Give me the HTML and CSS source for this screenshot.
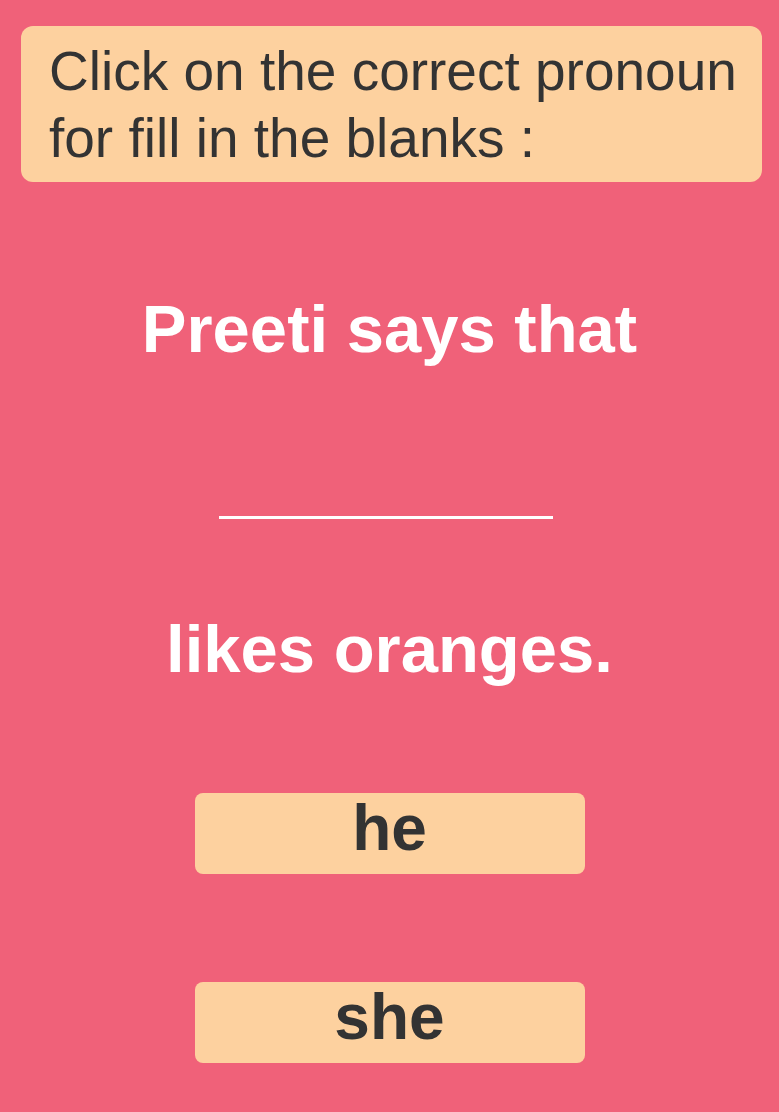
FILE: index.html
```html
<!DOCTYPE html>
<html>
<head>
<meta charset="utf-8">
<link rel="stylesheet" href="styles.css">
</head>
<body>
<div class="page">
  <div class="prompt">Click on the correct pronoun for fill in the blanks :</div>
  <div class="sentence first">Preeti says that</div>
  <div class="blank"></div>
  <div class="sentence second">likes oranges.</div>
  <div class="options">
    <div class="option">he</div>
    <div class="option">she</div>
  </div>
</div>
</body>
</html>
```
FILE: styles.css
```css
html, body {
  margin: 0;
  padding: 0;
  background: #f06179;
}
.page {
  width: 779px;
  height: 1112px;
  background: #f06179;
  font-family: "Liberation Sans", Arial, sans-serif;
  overflow: hidden;
  display: flex;
  flex-direction: column;
}
.prompt {
  margin: 26px 17px 0 21px;
  height: 156px;
  box-sizing: border-box;
  background: #fdd19f;
  border-radius: 12px;
  padding: 12px 20px 0 28px;
  font-size: 55px;
  line-height: 67px;
  color: #333333;
}
.sentence {
  font-size: 67px;
  font-weight: bold;
  line-height: 80px;
  color: #ffffff;
  text-align: center;
}
.first {
  margin-top: 107px;
}
.blank {
  width: 334px;
  height: 3px;
  background: #ffffff;
  margin: 147px auto 0;
  position: relative;
  left: -4px;
}
.second {
  margin-top: 90px;
}
.options {
  display: flex;
  flex-direction: column;
  align-items: center;
  gap: 108px;
  margin-top: 104px;
}
.option {
  width: 390px;
  height: 81px;
  box-sizing: border-box;
  background: #fdd19f;
  border-radius: 8px;
  text-align: center;
  font-size: 64px;
  font-weight: bold;
  line-height: 70px;
  color: #333333;
}
```
